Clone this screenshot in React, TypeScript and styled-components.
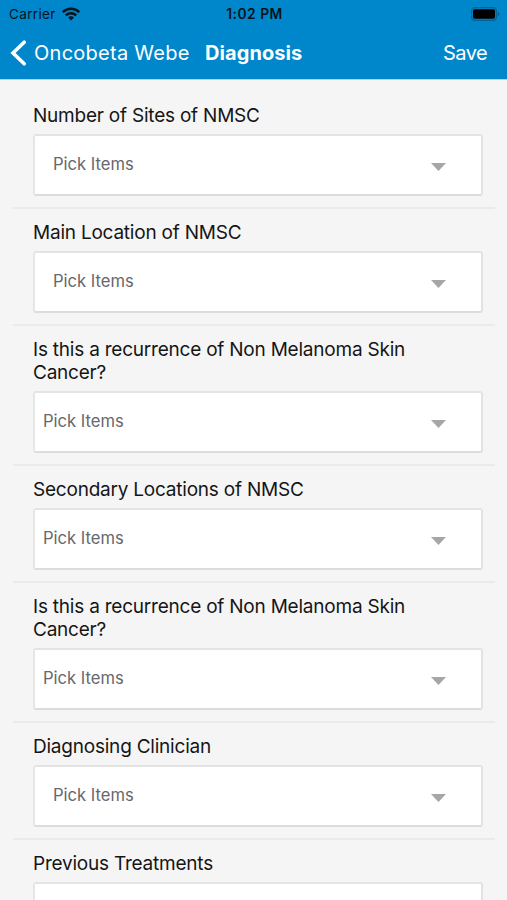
import React from "react";
import styled, { createGlobalStyle } from "styled-components";

const GlobalStyle = createGlobalStyle`
  *, *::before, *::after { box-sizing: border-box; }
  html, body { margin: 0; padding: 0; }
  body { background: #f5f5f5; }
`;

const Screen = styled.div`
  width: 507px;
  height: 900px;
  overflow: hidden;
  display: flex;
  flex-direction: column;
  background: #f5f5f5;
  font-family: Inter, "Liberation Sans", sans-serif;
`;

const Header = styled.header`
  flex: none;
  height: 80px;
  background: #0087cb;
  border-bottom: 1px solid #a5d9f3;
`;

const StatusBar = styled.div`
  height: 27px;
  display: grid;
  grid-template-columns: 1fr auto 1fr;
  align-items: center;
  padding: 1px 7px 0 9px;
  color: #06131c;
`;

const Carrier = styled.div`
  display: flex;
  align-items: center;
  gap: 6px;
  font-size: 13.5px;
  letter-spacing: 0.35px;
`;

const Clock = styled.div`
  margin-top: -1px;
  font-size: 13.8px;
  font-weight: 600;
  letter-spacing: 0.5px;
`;

const BatterySlot = styled.div`
  display: flex;
  justify-content: flex-end;
  margin-top: -1px;
`;

const NavBar = styled.nav`
  height: 51px;
  display: grid;
  grid-template-columns: 205px 1fr auto;
  align-items: center;
  padding: 0 20px 0 0;
  color: #fff;
  font-size: 20px;
`;

const BackButton = styled.div`
  display: flex;
  align-items: center;
  gap: 7px;
  padding-left: 10px;
  letter-spacing: 0.26px;
  white-space: nowrap;
`;

const Title = styled.div`
  font-weight: 700;
  letter-spacing: 0.08px;
`;

const SaveButton = styled.div`
  letter-spacing: -0.6px;
`;

const Form = styled.main`
  padding: 12px 12px 0 13px;
`;

const Field = styled.section`
  padding: 12px 12px 11px 20px;
  border-bottom: 2px solid #eaeaea;
`;

const Label = styled.div`
  width: 400px;
  margin-bottom: 7px;
  color: #151515;
  font-size: 19px;
  line-height: 23px;
  letter-spacing: -0.22px;
`;

const Select = styled.div<{ $inset: number }>`
  height: 62px;
  display: flex;
  align-items: center;
  justify-content: space-between;
  padding: 0 35px 2px ${(p) => p.$inset}px;
  background: #fff;
  border: 2px solid;
  border-color: #e4e4e4 #e2e2e2 #dcdcdc #e6e6e6;
  border-radius: 3px;
  color: #67676d;
  font-size: 16.6px;
`;

const Caret = styled.svg`
  display: block;
  margin-top: 6px;
`;

const fields = [
  { label: "Number of Sites of NMSC", inset: 18 },
  { label: "Main Location of NMSC", inset: 18 },
  { label: "Is this a recurrence of Non Melanoma Skin Cancer?", inset: 8 },
  { label: "Secondary Locations of NMSC", inset: 8 },
  { label: "Is this a recurrence of Non Melanoma Skin Cancer?", inset: 8 },
  { label: "Diagnosing Clinician", inset: 18 },
];

const WifiIcon = () => (
  <svg width="18" height="14" viewBox="0 0 18 14" fill="none" stroke="#06131c" strokeWidth="2.5">
    <path d="M0.8 5.2a11.6 11.6 0 0 1 16.4 0" />
    <path d="M3.8 8.4a7.4 7.4 0 0 1 10.4 0" />
    <path d="M9 13.6 6 10.6a4.2 4.2 0 0 1 6 0z" fill="#06131c" stroke="none" />
  </svg>
);

const BatteryIcon = () => (
  <svg width="29" height="14" viewBox="0 0 29 14">
    <rect x="0.6" y="0.6" width="24.8" height="12.8" rx="3.4" fill="none" stroke="#056095" strokeWidth="1.2" />
    <rect x="2" y="2.2" width="22" height="9.6" rx="1.8" fill="#000" />
    <path d="M26.8 4.7c2 .8 2 3.8 0 4.6z" fill="#056095" />
  </svg>
);

const BackIcon = () => (
  <svg width="17" height="26" viewBox="0 0 17 26" fill="none" stroke="#fff" strokeWidth="3.6" strokeLinecap="round">
    <path d="M14.2 2.2 3 13l11.2 10.8" />
  </svg>
);

export default function App() {
  return (
    <>
      <GlobalStyle />
      <Screen>
        <Header>
          <StatusBar>
            <Carrier>
              <span>Carrier</span>
              <WifiIcon />
            </Carrier>
            <Clock>1:02 PM</Clock>
            <BatterySlot>
              <BatteryIcon />
            </BatterySlot>
          </StatusBar>
          <NavBar>
            <BackButton>
              <BackIcon />
              <span>Oncobeta Webe</span>
            </BackButton>
            <Title>Diagnosis</Title>
            <SaveButton>Save</SaveButton>
          </NavBar>
        </Header>
        <Form>
          {fields.map((field, i) => (
            <Field key={i}>
              <Label>{field.label}</Label>
              <Select $inset={field.inset}>
                <span>Pick Items</span>
                <Caret width="15" height="8" viewBox="0 0 15 8">
                  <path d="M0 0h15L7.5 8z" fill="#a6a6a6" />
                </Caret>
              </Select>
            </Field>
          ))}
          <Field>
            <Label>Previous Treatments</Label>
            <Select $inset={18} />
          </Field>
        </Form>
      </Screen>
    </>
  );
}
